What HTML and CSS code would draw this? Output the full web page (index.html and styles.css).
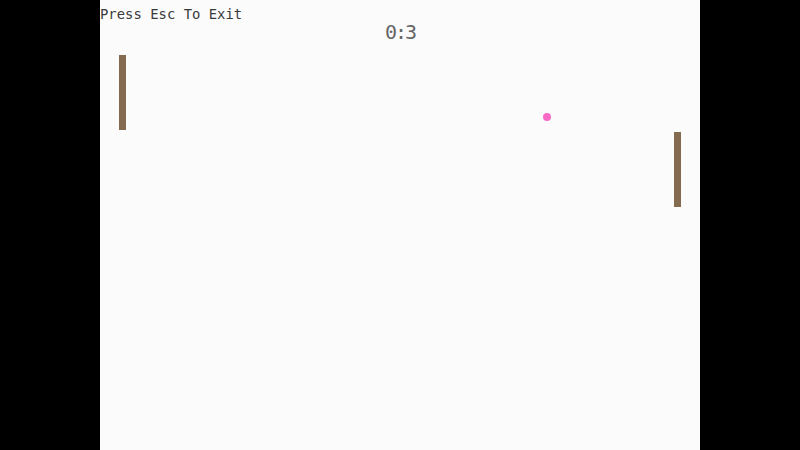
FILE: index.html
```html
<!DOCTYPE html>
<html>
<head>
<meta charset="utf-8">
<link rel="stylesheet" href="styles.css">
</head>
<body>
<div class="stage">
  <div class="hud">Press Esc To Exit</div>
  <div class="score">0:3</div>
  <div class="paddle left"></div>
  <div class="paddle right"></div>
  <div class="ball"></div>
</div>
</body>
</html>
```
FILE: styles.css
```css
html, body {
  margin: 0;
  padding: 0;
  background: #000;
  width: 800px;
  height: 450px;
  overflow: hidden;
}
body {
  display: flex;
  justify-content: center;
}
.stage {
  position: relative;
  width: 600px;
  height: 450px;
  background: #fbfbfc;
}
.hud {
  position: absolute;
  left: 0;
  top: 5px;
  font-family: "DejaVu Sans Mono", monospace;
  font-size: 13.9px;
  color: #3a3a3a;
  line-height: 18px;
}
.score {
  position: absolute;
  left: 270px;
  top: 21px;
  width: 60px;
  text-align: center;
  font-family: "DejaVu Sans Mono", monospace;
  font-size: 20px;
  letter-spacing: -2px;
  line-height: 22px;
  color: #666;
}
.paddle {
  position: absolute;
  width: 7px;
  height: 75px;
  background: #846a4e;
}
.left { left: 19px; top: 55px; }
.right { left: 574px; top: 132px; }
.ball {
  position: absolute;
  left: 443px;
  top: 113px;
  width: 8px;
  height: 8px;
  border-radius: 50%;
  background: #f76bc6;
}
```
